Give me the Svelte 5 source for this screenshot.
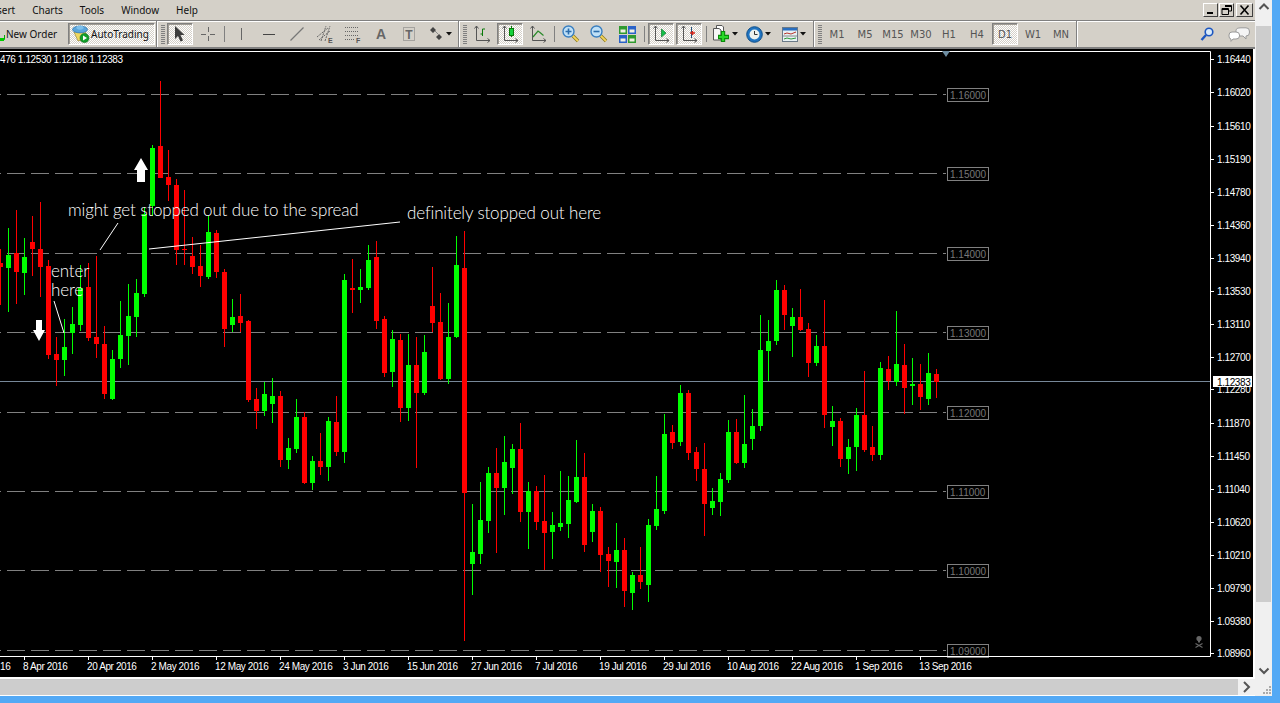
<script>
  const c = [
    ['r',0,249,305,263,267],['g',8,228,312,255,268],['r',16,210,304,253,272],['g',24,238,295,257,273],['r',32,216,276,242,249],['r',40,202,297,249,267],['r',48,260,359,266,355],['r',56,337,386,354,360],['g',64,319,376,347,360],['g',72,307,354,324,333],['g',80,265,331,288,325],['r',88,263,341,287,338],['r',96,256,358,337,344],['r',104,326,399,344,394],['g',112,350,400,359,399],['g',120,301,368,335,359],['g',128,284,365,316,336],['g',136,279,337,293,317],['g',144,207,297,214,294],['g',152,145,216,148,206],['r',160,81,178,146,178],['r',168,150,201,177,185],['r',176,179,265,185,250],['r',184,190,265,249,250],['r',192,237,274,256,267],['r',200,245,287,266,276],['g',208,216,279,232,277],['r',216,230,278,233,272],['r',224,269,347,272,329],['g',232,299,332,317,325],['r',240,294,332,316,323],['r',248,320,402,321,400],['r',256,388,429,399,411],['g',264,382,416,394,411],['g',272,378,423,396,404],['r',280,391,467,396,460],['g',288,438,469,448,460],['g',296,399,453,417,449],['r',304,412,484,417,483],['g',312,456,490,461,483],['r',320,433,475,461,467],['g',328,417,481,421,467],['r',336,396,456,422,452],['g',344,274,463,280,452],['r',352,259,313,288,290],['g',360,269,303,287,290],['g',368,245,290,260,288],['r',376,241,329,257,321],['r',384,316,377,319,373],['g',392,330,387,339,372],['r',400,334,422,340,408],['g',408,334,421,365,408],['r',416,337,468,365,393],['g',424,335,395,352,393],['r',432,267,332,306,323],['r',440,293,380,322,379],['g',448,303,384,337,379],['g',456,236,338,265,337],['r',464,231,641,268,493],['g',472,504,595,552,564],['g',480,482,564,520,554],['g',488,467,533,473,521],['r',496,448,553,473,488],['g',504,436,515,462,488],['g',512,444,494,449,468],['r',520,423,522,449,512],['g',528,482,549,491,512],['r',536,486,530,491,522],['r',544,475,570,521,533],['g',552,512,559,525,532],['g',560,471,531,523,527],['g',568,476,538,500,524],['g',576,440,503,477,502],['r',584,453,552,477,545],['g',592,504,542,511,532],['r',600,507,572,511,555],['r',608,547,587,554,561],['g',616,523,588,550,562],['r',624,538,607,550,591],['g',632,572,610,575,593],['r',640,547,589,575,582],['g',648,519,602,525,585],['g',656,476,530,509,526],['g',664,414,514,434,511],['r',672,425,449,432,443],['g',680,385,446,393,442],['r',688,390,460,393,453],['r',696,447,481,452,469],['r',704,443,536,469,504],['g',712,488,515,501,508],['g',720,473,516,479,502],['g',728,420,483,432,480],['r',736,419,464,432,463],['g',744,395,468,444,463],['g',752,409,450,426,439],['g',760,315,431,350,426],['g',768,320,381,341,351],['g',776,280,345,290,341],['r',784,285,330,290,315],['g',792,308,357,317,326],['r',800,289,331,317,330],['r',808,323,377,329,363],['g',816,335,366,346,363],['r',824,300,428,346,415],['g',832,406,446,421,427],['r',840,418,467,421,459],['g',848,439,474,447,459],['g',856,408,471,415,447],['r',864,371,452,415,450],['r',872,426,461,447,455],['g',880,362,460,368,455],['r',888,356,390,369,381],['g',896,311,386,364,382],['r',904,344,414,365,388],['g',912,358,405,384,386],['r',920,364,410,384,397],['g',928,353,405,373,399],['r',936,369,398,374,382]
  ];
  const levels = [[94,'1.16000'],[173,'1.15000'],[253,'1.14000'],[332,'1.13000'],[412,'1.12000'],[491,'1.11000'],[570,'1.10000'],[650,'1.09000']];
  const axis = [[59,'1.16440'],[92,'1.16020'],[126,'1.15610'],[159,'1.15190'],[192,'1.14780'],[225,'1.14360'],[258,'1.13940'],[291,'1.13530'],[324,'1.13110'],[357,'1.12700'],[389,'1.12280'],[423,'1.11870'],[456,'1.11450'],[489,'1.11040'],[522,'1.10620'],[555,'1.10210'],[588,'1.09790'],[621,'1.09380'],[653,'1.08960']];
  const dates = [[24,'8 Apr 2016'],[88,'20 Apr 2016'],[152,'2 May 2016'],[216,'12 May 2016'],[280,'24 May 2016'],[344,'3 Jun 2016'],[408,'15 Jun 2016'],[472,'27 Jun 2016'],[536,'7 Jul 2016'],[600,'19 Jul 2016'],[664,'29 Jul 2016'],[728,'10 Aug 2016'],[792,'22 Aug 2016'],[856,'1 Sep 2016'],[920,'13 Sep 2016']];
  const periods = ['M1','M5','M15','M30','H1','H4','D1','W1','MN'];
</script>

{#snippet axes()}
  <path d="M4.5 2V16.5H18M2.5 4.5L4.5 2L6.5 4.5M15.5 14.5L18 16.5L15.5 18.5" fill="none" stroke="#555"/>
{/snippet}
{#snippet caret()}
  <svg class="caret" width="6" height="4" viewBox="0 0 6 4"><path d="M0 0H6L3 3.5Z" fill="#111"/></svg>
{/snippet}
{#snippet grip()}
  <div class="grip"></div>
{/snippet}
{#snippet lens(minus)}
  <svg width="18" height="18" viewBox="0 0 18 18">
    <path d="M10.5 10.5L16 16" stroke="#8a7a20" stroke-width="3.4"/>
    <path d="M10.5 10.5L16 16" stroke="#f3d35a" stroke-width="1.8"/>
    <circle cx="6.5" cy="6.5" r="5.5" fill="#bfe0f7" stroke="#3a7fc0" stroke-width="1.4"/>
    <path d={minus ? 'M3.5 6.5H9.5' : 'M3.5 6.5H9.5M6.5 3.5V9.5'} stroke="#2b6cab" stroke-width="1.6"/>
  </svg>
{/snippet}

<div class="screen">
  <div class="window">
    <div class="menu">
      <span class="clipped">sert</span><span>Charts</span><span>Tools</span><span>Window</span><span>Help</span>
      <div class="winbtns">
        <div class="winbtn"><svg width="13" height="12" viewBox="0 0 13 12"><rect x="3" y="8" width="6" height="2" fill="#000"/></svg></div>
        <div class="winbtn"><svg width="13" height="12" viewBox="0 0 13 12"><path d="M5 1.5H11.5V7H9M2 4.5H8.5V10.5H2ZM2 5.5H8.5M5 2.5H11.5" fill="none" stroke="#000"/></svg></div>
        <div class="winbtn wide"><svg width="13" height="12" viewBox="0 0 13 12"><path d="M2.5 1.5L10.5 10.5M10.5 1.5L2.5 10.5" stroke="#000" stroke-width="1.6"/></svg></div>
      </div>
    </div>

    <div class="toolbar">
      <div class="neworder">
        <svg width="6" height="22" viewBox="0 0 6 22"><path d="M0 16.5H4.5V12" fill="none" stroke="#0a0"/><rect x="0" y="15" width="4" height="3" fill="#0c0"/></svg>
        <span>New Order</span>
      </div>
      <div class="auto on">
        <svg width="20" height="20" viewBox="0 0 20 20">
          <path d="M3 8L14 6L16 15L7 17Z" fill="#f0d860" stroke="#8a7a30" stroke-width=".6"/>
          <ellipse cx="9" cy="5.5" rx="7.5" ry="3.4" fill="#5aa5dc" stroke="#2f74ad" stroke-width=".7"/>
          <ellipse cx="9" cy="3.6" rx="3.6" ry="2.1" fill="#7ec0ec"/>
          <circle cx="13.5" cy="14" r="4.5" fill="#11a02a" stroke="#0a6a1a" stroke-width=".6"/>
          <path d="M12 11.5L16 14L12 16.5Z" fill="#fff"/>
        </svg>
        <span>AutoTrading</span>
      </div>
      <div class="sep w4"></div>
      {@render grip()}

      <div class="cell"><div class="press on"><svg width="16" height="18" viewBox="0 0 16 18"><path d="M3 1V14L6 11L8.5 16.5L11 15.5L8.5 10H12.5Z" fill="#3c3c3c"/></svg></div></div>
      <div class="cell"><svg width="16" height="16" viewBox="0 0 16 16"><path d="M8.5 1V6M8.5 10V15M1 8.5H6M10 8.5H15" stroke="#666"/></svg></div>
      <div class="sep w5 short"></div>
      <div class="cell"><svg width="16" height="16" viewBox="0 0 16 16"><path d="M8.5 2V14" stroke="#666"/></svg></div>
      <div class="cell"><svg width="16" height="16" viewBox="0 0 16 16"><path d="M2 8.5H14" stroke="#444"/></svg></div>
      <div class="cell"><svg width="16" height="16" viewBox="0 0 16 16"><path d="M1.5 14.5L14.5 1.5" stroke="#777" stroke-width="1.2"/></svg></div>
      <div class="cell"><svg width="18" height="18" viewBox="0 0 18 18"><path d="M1 12L12 3M3 15L14 6M5 16L10 1M9 16L14 1" stroke="#666" stroke-dasharray="2 1"/><text x="12" y="17.5" class="ic">E</text></svg></div>
      <div class="cell"><svg width="18" height="18" viewBox="0 0 18 18"><path d="M1 2.5H15M1 6.5H15M1 10.5H15M1 14.5H10" stroke="#666" stroke-dasharray="1 1"/><text x="12" y="17.5" class="ic">F</text></svg></div>
      <div class="cell"><svg width="16" height="16" viewBox="0 0 16 16"><text x="8" y="13" text-anchor="middle" class="bigA">A</text></svg></div>
      <div class="cell"><svg width="16" height="16" viewBox="0 0 16 16"><path d="M2.5 1.5H13.5V14.5H2.5Z" fill="none" stroke="#777" stroke-dasharray="1 1"/><text x="8" y="12.5" text-anchor="middle" class="bigT">T</text></svg></div>
      <div class="cell drop w33">
        <svg width="16" height="16" viewBox="0 0 16 16"><path d="M2 4L5 1L8 4L5 7ZM8 11L11 8L14 11L11 14Z" fill="#444"/><path d="M7 5L10 8" stroke="#888"/></svg>
        {@render caret()}
      </div>
      <div class="sep w5"></div>
      {@render grip()}

      <div class="cell"><svg width="20" height="20" viewBox="0 0 20 20">{@render axes()}<path d="M10.5 12V5H13M8.5 10H10.5" fill="none" stroke="#0a7a0a"/></svg></div>
      <div class="cell"><div class="press on"><svg width="20" height="20" viewBox="0 0 20 20">{@render axes()}<path d="M11.5 2V13" stroke="#0a7a0a"/><rect x="9.5" y="4.5" width="4" height="7" fill="#14d23c" stroke="#0a7a0a"/></svg></div></div>
      <div class="cell"><svg width="20" height="20" viewBox="0 0 20 20">{@render axes()}<path d="M5 13L10 7L12 8.5L15.5 11.5" fill="none" stroke="#2a8a2a" stroke-width="1.2"/></svg></div>
      <div class="sep w5 short"></div>
      <div class="cell">{@render lens(false)}</div>
      <div class="cell">{@render lens(true)}</div>
      <div class="cell"><svg width="17" height="17" viewBox="0 0 17 17"><rect width="8" height="8" fill="#2f9a2f"/><rect x="9" width="8" height="8" fill="#2a62c8"/><rect y="9" width="8" height="8" fill="#2a62c8"/><rect x="9" y="9" width="8" height="8" fill="#2f9a2f"/><path d="M1.5 3.5H6.5V6.5H1.5ZM10.5 3.5H15.5V6.5H10.5ZM1.5 12.5H6.5V15.5H1.5ZM10.5 12.5H15.5V15.5H10.5Z" fill="#f1f1e4"/></svg></div>
      <div class="sep w6 short"></div>
      <div class="cell"><div class="press on"><svg width="20" height="20" viewBox="0 0 20 20">{@render axes()}<path d="M10.5 5V13L15 9Z" fill="#15c04a" stroke="#0a7a2a" stroke-width=".7"/></svg></div></div>
      <div class="cell"><div class="press on"><svg width="20" height="20" viewBox="0 0 20 20">{@render axes()}<path d="M12.5 3V14" stroke="#23507a"/><path d="M11 9H16M13.5 7V11" stroke="#d8261a" stroke-width="1.4"/></svg></div></div>
      <div class="sep w6 short"></div>
      <div class="cell drop w32">
        <svg width="18" height="18" viewBox="0 0 18 18"><path d="M4.5 .5H10L11.5 2V12H4.5Z" fill="#fff" stroke="#555"/><path d="M1.5 3.5H7L9 5V15H1.5Z" fill="#f6f6f6" stroke="#555"/><path d="M11 6V17M6 12H17" stroke="#0a8a0a" stroke-width="4.4"/><path d="M11 7V16M7 12H16" stroke="#28d828" stroke-width="2.2"/></svg>
        {@render caret()}
      </div>
      <div class="cell drop w34">
        <svg width="17" height="17" viewBox="0 0 17 17"><circle cx="8.5" cy="8.5" r="7.8" fill="#1f73c0" stroke="#11508a"/><circle cx="8.5" cy="8.5" r="5" fill="#eef1ee"/><path d="M8.5 5V8.5H11.5" fill="none" stroke="#333"/></svg>
        {@render caret()}
      </div>
      <div class="cell drop w37">
        <svg width="16" height="15" viewBox="0 0 16 15"><rect x=".5" y=".5" width="15" height="14" fill="#e8f1f4" stroke="#6b7a88"/><rect x="1" y="1" width="14" height="2.5" fill="#2a6fc0"/><path d="M2 7L5 6L9 7L14 5" fill="none" stroke="#b8342a"/><path d="M1 9H15" stroke="#888"/><path d="M2 12L5 11L9 12L14 11" fill="none" stroke="#2d9a3a"/></svg>
        {@render caret()}
      </div>
      <div class="sep w4"></div>
      {@render grip()}

      {#each periods as p}
        <div class="cell period"><div class="press" class:on={p === 'D1'}>{p}</div></div>
      {/each}
      <div class="sep w4"></div>

      <div class="tail">
        <svg width="14" height="15" viewBox="0 0 14 15"><circle cx="9" cy="5" r="3.8" fill="#d8eafa" stroke="#1c56c0" stroke-width="1.6"/><path d="M6 8L1.5 13" stroke="#1c56c0" stroke-width="2.4"/></svg>
        <svg width="22" height="15" viewBox="0 0 22 15"><path d="M8 3.5Q8 .8 13 .8H18Q21.4 .8 21.4 4V6Q21.4 9 18 9L18 12L15 9H11Q8 9 8 6Z" fill="#f4f4f4" stroke="#9a9a9a"/><path d="M1 8Q1 5 4 5H8Q11.5 5 11.5 8V9Q11.5 12 8 12H5L3 14.4V12Q1 12 1 9Z" fill="#fff" stroke="#9a9a9a"/></svg>
      </div>
    </div>

    <svg class="chart" width="1255" height="628" viewBox="0 49 1255 628">
      <rect x="0" y="49" width="1253" height="628" fill="#000"/>
      {#each levels as [y]}
        <path d="M-17 {y + .5}H946" class="dash"/>
      {/each}
      <path d="M0 381.5H1210" class="priceline"/>
      {#each c as [t, x, hi, lo, top, bot]}
        <rect {x} y={hi} width="1" height={lo - hi} fill={t === 'r' ? '#f00' : '#0f0'} shape-rendering="crispEdges"/>
        <rect x={x - 2} y={top} width="5" height={bot - top} fill={t === 'r' ? '#f00' : '#0f0'} shape-rendering="crispEdges"/>
      {/each}
      {#each levels as [y, l]}
        <rect x="947.5" y={y - 5.5} width="41" height="13" class="lvl"/>
        <text x="950" y={y + 5} class="lvlt">{l}</text>
      {/each}

      <path d="M0 51.5H1210.5V656.5H0" class="frame"/>
      <text x="0" y="63" class="ax">476 1.12530 1.12186 1.12383</text>
      <path d="M942 51H950L946 57Z" fill="#6d8ca0"/>
      {#each axis as [y, l]}
        <path d="M1211 {y + .5}H1214" stroke="#fff"/>
        <text x="1217" y={y + 4} class="ax">{l}</text>
      {/each}
      <rect x="1213" y="376" width="39" height="11" fill="#fff"/>
      <text x="1217" y="385.5" class="ax cur">1.12383</text>
      <text x="0" y="670" class="ax">16</text>
      {#each dates as [x, l]}
        <path d="M{x + .5} 656V660" stroke="#fff"/>
        <text x={x - 1} y="670" class="ax">{l}</text>
      {/each}

      <g fill="#666">
        <circle cx="1199" cy="638.5" r="2.6"/>
        <rect x="1198" y="640" width="2" height="2.5"/>
        <path d="M1195.5 643.5L1202.5 647.5M1202.5 643.5L1195.5 647.5" stroke="#666" stroke-width="1.2"/>
      </g>

      <path d="M100 250L118 223" class="note"/>
      <path d="M149 249L400 222" class="note"/>
      <path d="M54 301L64 333" class="note"/>
      <polygon points="141,158 148,170 145,170 145,182 137,182 137,170 134,170" fill="#fff"/>
      <polygon points="36,320 42,320 42,330 45,330 39,341 33,330 36,330" fill="#fff"/>
      <text x="68" y="216" class="anno">might get stopped out due to the spread</text>
      <text x="407" y="219" class="anno">definitely stopped out here</text>
      <text x="51" y="277" class="anno">enter</text>
      <text x="51" y="296" class="anno">here</text>
    </svg>

    <div class="hbar">
      <div class="hthumb"></div>
      <svg width="17" height="16" viewBox="0 0 17 16"><path d="M6 3L11 8L6 13" fill="none" stroke="#555" stroke-width="2"/></svg>
    </div>
  </div>

  <div class="vbar">
    <svg class="chev" width="16" height="26" viewBox="0 0 16 26"><path d="M3.5 9L8 4.5L12.5 9" fill="none" stroke="#555" stroke-width="2"/></svg>
    <div class="vthumb"></div>
    <div class="vrest"></div>
    <svg class="chev" width="16" height="34" viewBox="0 0 16 34"><path d="M3.5 6.5L8 11L12.5 6.5" fill="none" stroke="#555" stroke-width="2"/><path d="M13 31H15M10 31H12M7 31H9M13 28H15M10 28H12M13 25H15" stroke="#aaa" stroke-width="2"/></svg>
  </div>
</div>

<style>
  :global(body) { margin: 0; background: #53a9f5; overflow: hidden; }
  .screen { display: flex; width: 1280px; height: 703px; background: #53a9f5; font-family: "Noto Sans", sans-serif; }
  .window { display: flex; flex-direction: column; width: 1255px; height: 696px; border-bottom: 1px solid #fff; box-sizing: border-box; background: #fff; }
  .menu { display: flex; align-items: center; gap: 17px; height: 20px; flex: none; background: #d4d0c8; font-size: 10px; color: #111; line-height: 20px; }
  .clipped { margin-left: -3px; }
  .winbtns { display: flex; gap: 1px; margin-left: auto; margin-right: 2px; }
  .winbtn { display: flex; align-items: center; justify-content: center; width: 15px; height: 14px; box-sizing: border-box; background: #d4d0c8; border: 1px solid; border-color: #fff #404040 #404040 #fff; }
  .winbtn.wide { width: 17px; margin-left: 1px; }
  .toolbar { display: flex; align-items: flex-start; height: 29px; flex: none; box-sizing: border-box; border-top: 1px solid #808080; border-bottom: 2px solid #808080; background: linear-gradient(#fff 0 1px, #d4d0c8 1px); padding-top: 2px; color: #555; font-size: 10px; }
  .toolbar svg { display: block; flex: none; }
  .neworder { display: flex; align-items: center; width: 68px; height: 22px; flex: none; color: #111; font-size: 10px; }
  .auto { display: flex; align-items: center; width: 87px; height: 22px; box-sizing: border-box; padding-left: 2px; flex: none; color: #111; font-size: 10px; }
  .on { background: repeating-conic-gradient(#fff 0 25%, #d4d0c8 0 50%) 0 0 / 2px 2px; border: 1px solid; border-color: #808080 #fff #fff #808080; box-shadow: inset 1px 1px 0 #a09c94; }
  .sep { flex: none; height: 26px; margin-top: -2px; }
  .sep::after { content: ""; display: block; margin: 0 auto; width: 2px; height: 26px; background: linear-gradient(90deg, #808080 0 1px, #fff 1px); }
  .w4 { width: 4px; } .w5 { width: 5px; } .w6 { width: 6px; }
  .sep.short::after { width: 1px; height: 16px; margin-top: 5px; background: #808080; }
  .grip { flex: none; width: 4px; margin: 2px 1px 0 2px; height: 19px; background: repeating-linear-gradient(#808080 0 1px, transparent 1px 2px); }
  .cell { display: flex; align-items: center; justify-content: center; flex: none; width: 28px; height: 22px; }
  .press { display: flex; align-items: center; justify-content: center; width: 26px; height: 22px; box-sizing: border-box; }
  .drop { gap: 2px; }
  .cell.w32 { width: 32px; } .cell.w33 { width: 33px; } .cell.w34 { width: 34px; } .cell.w37 { width: 37px; }
  .period { font-family: "DejaVu Sans", sans-serif; font-size: 10px; color: #555; }
  .tail { display: flex; align-items: center; gap: 14px; height: 22px; margin-left: auto; margin-right: 5px; }
  .chart { display: block; flex: none; background: #fff; }
  .dash { stroke: #808080; stroke-dasharray: 18 6; fill: none; }
  .priceline { stroke: #778899; fill: none; }
  .frame { stroke: #fff; fill: none; }
  .lvl { fill: #000; stroke: #808080; }
  .lvlt { font: 10px "Liberation Sans", sans-serif; fill: #777; }
  .ax { font: 10px "Liberation Sans", sans-serif; fill: #fff; letter-spacing: -.4px; }
  .cur { fill: #000; }
  .note { stroke: #fff; fill: none; }
  .anno { font: 300 17px "Lato", sans-serif; fill: #fff; letter-spacing: -.15px; }
  .ic { font: bold 7px "Liberation Sans", sans-serif; fill: #555; }
  .bigA { font: bold 14px "Liberation Sans", sans-serif; fill: #666; }
  .bigT { font: bold 12px "Liberation Sans", sans-serif; fill: #666; }
  .hbar { display: flex; flex: none; align-items: stretch; height: 16px; margin-top: 2px; background: #f0f0f0; }
  .hthumb { width: 1238px; flex: none; background: #cdcdcd; }
  .vbar { display: flex; flex-direction: column; width: 17px; height: 696px; flex: none; background: #f0f0f0; box-sizing: border-box; padding: 0 0 0 1px; }
  .vbar .chev { display: block; flex: none; }
  .vthumb { height: 576px; flex: none; background: #cdcdcd; margin-right: 1px; }
  .vrest { flex: 1; }
</style>
